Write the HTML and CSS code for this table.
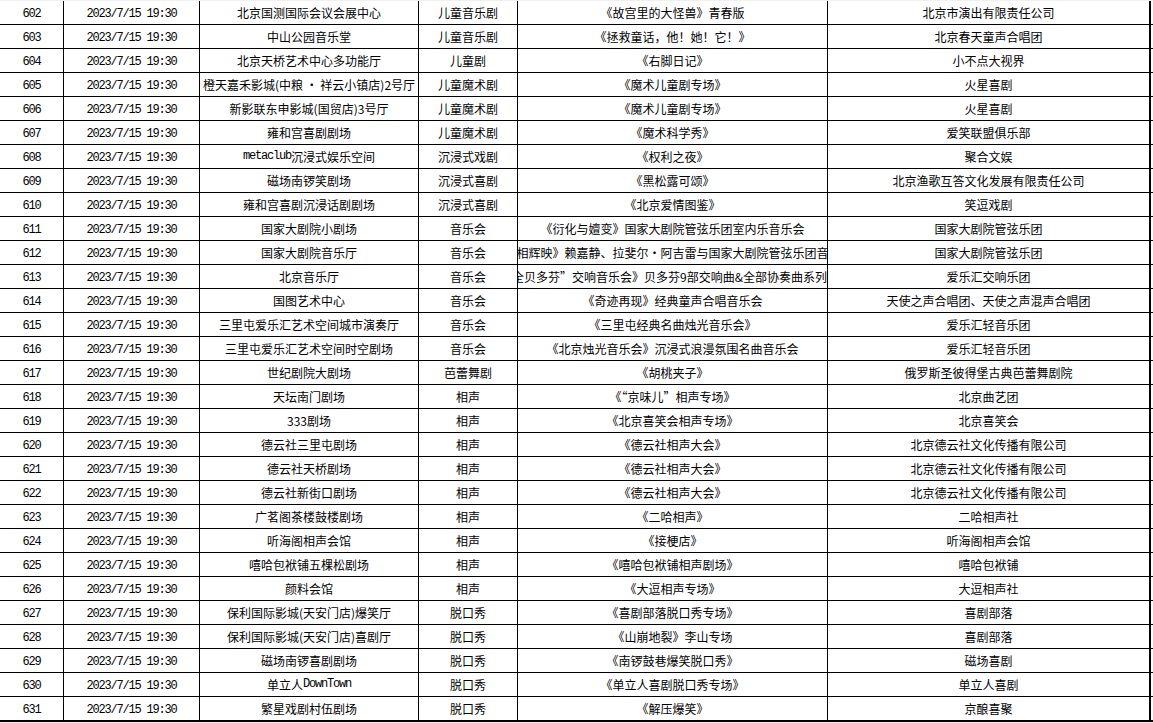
FILE: index.html
```html
<!DOCTYPE html>
<html lang="zh">
<head>
<meta charset="utf-8">
<title>演出列表</title>
<link rel="stylesheet" href="styles.css">
</head>
<body>
<div class="sheet">
  <div class="row"><div class="c n">602</div><div class="c d">2023/7/15 19:30</div><div class="c">北京国测国际会议会展中心</div><div class="c">儿童音乐剧</div><div class="c">《故宫里的大怪兽》青春版</div><div class="c">北京市演出有限责任公司</div></div>
  <div class="row"><div class="c n">603</div><div class="c d">2023/7/15 19:30</div><div class="c">中山公园音乐堂</div><div class="c">儿童音乐剧</div><div class="c">《拯救童话，他！她！它！》</div><div class="c">北京春天童声合唱团</div></div>
  <div class="row"><div class="c n">604</div><div class="c d">2023/7/15 19:30</div><div class="c">北京天桥艺术中心多功能厅</div><div class="c">儿童剧</div><div class="c">《右脚日记》</div><div class="c">小不点大视界</div></div>
  <div class="row"><div class="c n">605</div><div class="c d">2023/7/15 19:30</div><div class="c">橙天嘉禾影城(中粮 · 祥云小镇店)2号厅</div><div class="c">儿童魔术剧</div><div class="c">《魔术儿童剧专场》</div><div class="c">火星喜剧</div></div>
  <div class="row"><div class="c n">606</div><div class="c d">2023/7/15 19:30</div><div class="c">新影联东申影城(国贸店)3号厅</div><div class="c">儿童魔术剧</div><div class="c">《魔术儿童剧专场》</div><div class="c">火星喜剧</div></div>
  <div class="row"><div class="c n">607</div><div class="c d">2023/7/15 19:30</div><div class="c">雍和宫喜剧剧场</div><div class="c">儿童魔术剧</div><div class="c">《魔术科学秀》</div><div class="c">爱笑联盟俱乐部</div></div>
  <div class="row"><div class="c n">608</div><div class="c d">2023/7/15 19:30</div><div class="c"><span class="lat">metaclub</span>沉浸式娱乐空间</div><div class="c">沉浸式戏剧</div><div class="c">《权利之夜》</div><div class="c">聚合文娱</div></div>
  <div class="row"><div class="c n">609</div><div class="c d">2023/7/15 19:30</div><div class="c">磁场南锣笑剧场</div><div class="c">沉浸式喜剧</div><div class="c">《黑松露可颂》</div><div class="c">北京渔歌互答文化发展有限责任公司</div></div>
  <div class="row"><div class="c n">610</div><div class="c d">2023/7/15 19:30</div><div class="c">雍和宫喜剧沉浸话剧剧场</div><div class="c">沉浸式喜剧</div><div class="c">《北京爱情图鉴》</div><div class="c">笑逗戏剧</div></div>
  <div class="row"><div class="c n">611</div><div class="c d">2023/7/15 19:30</div><div class="c">国家大剧院小剧场</div><div class="c">音乐会</div><div class="c">《衍化与嬗变》国家大剧院管弦乐团室内乐音乐会</div><div class="c">国家大剧院管弦乐团</div></div>
  <div class="row"><div class="c n">612</div><div class="c d">2023/7/15 19:30</div><div class="c">国家大剧院音乐厅</div><div class="c">音乐会</div><div class="c"><span class="ov">《交相辉映》赖嘉静、拉斐尔·阿吉雷与国家大剧院管弦乐团音乐会</span></div><div class="c">国家大剧院管弦乐团</div></div>
  <div class="row"><div class="c n">613</div><div class="c d">2023/7/15 19:30</div><div class="c">北京音乐厅</div><div class="c">音乐会</div><div class="c"><span class="ov">《“全贝多芬”交响音乐会》贝多芬9部交响曲&amp;全部协奏曲系列音乐</span></div><div class="c">爱乐汇交响乐团</div></div>
  <div class="row"><div class="c n">614</div><div class="c d">2023/7/15 19:30</div><div class="c">国图艺术中心</div><div class="c">音乐会</div><div class="c">《奇迹再现》经典童声合唱音乐会</div><div class="c">天使之声合唱团、天使之声混声合唱团</div></div>
  <div class="row"><div class="c n">615</div><div class="c d">2023/7/15 19:30</div><div class="c">三里屯爱乐汇艺术空间城市演奏厅</div><div class="c">音乐会</div><div class="c">《三里屯经典名曲烛光音乐会》</div><div class="c">爱乐汇轻音乐团</div></div>
  <div class="row"><div class="c n">616</div><div class="c d">2023/7/15 19:30</div><div class="c">三里屯爱乐汇艺术空间时空剧场</div><div class="c">音乐会</div><div class="c">《北京烛光音乐会》沉浸式浪漫氛围名曲音乐会</div><div class="c">爱乐汇轻音乐团</div></div>
  <div class="row"><div class="c n">617</div><div class="c d">2023/7/15 19:30</div><div class="c">世纪剧院大剧场</div><div class="c">芭蕾舞剧</div><div class="c">《胡桃夹子》</div><div class="c">俄罗斯圣彼得堡古典芭蕾舞剧院</div></div>
  <div class="row"><div class="c n">618</div><div class="c d">2023/7/15 19:30</div><div class="c">天坛南门剧场</div><div class="c">相声</div><div class="c">《“京味儿”相声专场》</div><div class="c">北京曲艺团</div></div>
  <div class="row"><div class="c n">619</div><div class="c d">2023/7/15 19:30</div><div class="c">333剧场</div><div class="c">相声</div><div class="c">《北京喜笑会相声专场》</div><div class="c">北京喜笑会</div></div>
  <div class="row"><div class="c n">620</div><div class="c d">2023/7/15 19:30</div><div class="c">德云社三里屯剧场</div><div class="c">相声</div><div class="c">《德云社相声大会》</div><div class="c">北京德云社文化传播有限公司</div></div>
  <div class="row"><div class="c n">621</div><div class="c d">2023/7/15 19:30</div><div class="c">德云社天桥剧场</div><div class="c">相声</div><div class="c">《德云社相声大会》</div><div class="c">北京德云社文化传播有限公司</div></div>
  <div class="row"><div class="c n">622</div><div class="c d">2023/7/15 19:30</div><div class="c">德云社新街口剧场</div><div class="c">相声</div><div class="c">《德云社相声大会》</div><div class="c">北京德云社文化传播有限公司</div></div>
  <div class="row"><div class="c n">623</div><div class="c d">2023/7/15 19:30</div><div class="c">广茗阁茶楼鼓楼剧场</div><div class="c">相声</div><div class="c">《二哈相声》</div><div class="c">二哈相声社</div></div>
  <div class="row"><div class="c n">624</div><div class="c d">2023/7/15 19:30</div><div class="c">听海阁相声会馆</div><div class="c">相声</div><div class="c">《接梗店》</div><div class="c">听海阁相声会馆</div></div>
  <div class="row"><div class="c n">625</div><div class="c d">2023/7/15 19:30</div><div class="c">嘻哈包袱铺五棵松剧场</div><div class="c">相声</div><div class="c">《嘻哈包袱铺相声剧场》</div><div class="c">嘻哈包袱铺</div></div>
  <div class="row"><div class="c n">626</div><div class="c d">2023/7/15 19:30</div><div class="c">颜料会馆</div><div class="c">相声</div><div class="c">《大逗相声专场》</div><div class="c">大逗相声社</div></div>
  <div class="row"><div class="c n">627</div><div class="c d">2023/7/15 19:30</div><div class="c">保利国际影城(天安门店)爆笑厅</div><div class="c">脱口秀</div><div class="c">《喜剧部落脱口秀专场》</div><div class="c">喜剧部落</div></div>
  <div class="row"><div class="c n">628</div><div class="c d">2023/7/15 19:30</div><div class="c">保利国际影城(天安门店)喜剧厅</div><div class="c">脱口秀</div><div class="c">《山崩地裂》李山专场</div><div class="c">喜剧部落</div></div>
  <div class="row"><div class="c n">629</div><div class="c d">2023/7/15 19:30</div><div class="c">磁场南锣喜剧剧场</div><div class="c">脱口秀</div><div class="c">《南锣鼓巷爆笑脱口秀》</div><div class="c">磁场喜剧</div></div>
  <div class="row"><div class="c n">630</div><div class="c d">2023/7/15 19:30</div><div class="c">单立人<span class="lat">DownTown</span></div><div class="c">脱口秀</div><div class="c">《单立人喜剧脱口秀专场》</div><div class="c">单立人喜剧</div></div>
  <div class="row last"><div class="c n">631</div><div class="c d">2023/7/15 19:30</div><div class="c">繁星戏剧村伍剧场</div><div class="c">脱口秀</div><div class="c">《解压爆笑》</div><div class="c">京酿喜聚</div></div>
</div>
</body>
</html>
```

FILE: styles.css
```css
html, body {
  margin: 0;
  padding: 0;
  background: #ffffff;
}
body {
  font-family: "Noto Sans CJK SC", "Noto Sans", sans-serif;
  font-size: 12px;
  color: #000;
  overflow: hidden;
}
.sheet {
  padding-top: 1px;
  width: 1153px;
  height: 722px;
  background: #f0f0f0;
  display: flex;
  flex-direction: column;
}
.row {
  display: grid;
  grid-template-columns: 64px 136px 219px 99px 310px 323px 2px;
  height: 24px;
  box-sizing: border-box;
  border-bottom: 1px solid #000;
  background: #fff;
  flex: none;
}
.row.last {
  height: 25px;
  border-bottom-width: 2px;
}
.c {
  box-sizing: border-box;
  border-right: 1px solid #000;
  display: flex;
  align-items: center;
  justify-content: center;
  overflow: hidden;
  white-space: nowrap;
  line-height: 23px;
}
.c:nth-child(6) {
  border-right-width: 2px;
}
.n, .d, .lat {
  font-family: "Liberation Mono", "DejaVu Sans Mono", monospace;
  letter-spacing: -1.2px;
}
.n, .d {
  padding-top: 3px;
}
.ov {
  flex: none;
  white-space: nowrap;
}
```
